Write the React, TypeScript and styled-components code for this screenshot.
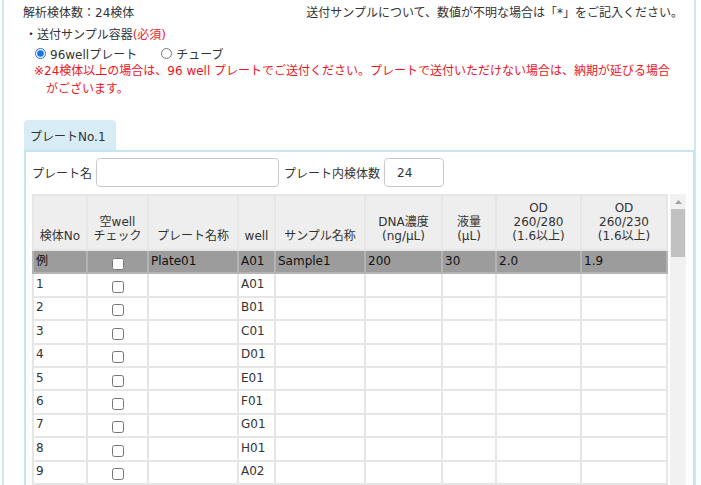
import * as React from 'react'
import styled, { createGlobalStyle } from 'styled-components'

const GlobalStyle = createGlobalStyle`
    html, body {
        margin: 0;
        padding: 0;
        overflow: hidden;
        background: #fff;
    }
    body {
        font-family: "DejaVu Sans", "Noto Sans CJK JP", sans-serif;
        font-size: 12px;
        color: #333;
    }
`

const StyledPage = styled.div`
    margin-left: 2px;
    min-height: 600px;
    border-left: 2px solid #cde8f1;
    border-right: 2px solid #cde8f1;
    padding: 4px 8px 0 20px;
    box-sizing: content-box;
    width: 662px;
`

const StyledTopRow = styled.div`
    display: flex;
    justify-content: space-between;
    line-height: 18px;
    margin-left: -1px;
    padding-right: 3px;
`

const StyledSectionTitle = styled.div`
    margin-top: 4px;
    margin-left: 1px;
    line-height: 18px;
`

const Required = styled.span`
    color: #e8262d;
`

const StyledRadioRow = styled.div`
    display: flex;
    align-items: center;
    height: 18px;
    padding-left: 11px;
`

const StyledRadioLabel = styled.label<{ $gap?: number }>`
    display: flex;
    align-items: center;
    margin-right: ${(p) => p.$gap ?? 0}px;
    input {
        width: 11px;
        height: 11px;
        margin: 0 4px 0 0;
        accent-color: #1a73e8;
    }
`

const StyledNote = styled.div`
    color: #f0141e;
    line-height: 18px;
    padding-left: 22px;
    padding-right: 10px;
    text-indent: -12px;
`

const StyledTab = styled.div`
    display: inline-flex;
    align-items: center;
    height: 30px;
    margin-top: 22px;
    padding: 0 10px 0 6px;
    background: #d7ecf4;
    border-radius: 4px 4px 0 0;
`

const StyledPanel = styled.div`
    border: 2px solid #c8e5ef;
    width: 659px;
    padding: 6px 2px 0 6px;
    min-height: 400px;
`

const StyledFormRow = styled.div`
    display: flex;
    align-items: center;
    gap: 5px;
    height: 29px;
`

const StyledLabel = styled.span`
    margin-right: -1px;
`

const StyledInput = styled.input<{ $width: number }>`
    width: ${(p) => p.$width}px;
    height: 29px;
    box-sizing: border-box;
    border: 1px solid #c9c9c9;
    border-radius: 4px;
    padding: 0 12px;
    font: inherit;
    color: #333;
`

const StyledGridArea = styled.div`
    display: flex;
    gap: 2px;
    margin-top: 7px;
    align-items: flex-start;
`

const StyledTable = styled.table`
    width: 634px;
    table-layout: fixed;
    border-collapse: collapse;
    th, td {
        border: 2px solid #e6e6e6;
    }
    th {
        background: #eeeeee;
        font-weight: normal;
        line-height: 14px;
        vertical-align: bottom;
        padding: 0 2px 6px;
        height: 47px;
        text-align: center;
        color: #333;
    }
    td {
        height: 19.4px;
        padding: 0 2px 2px;
        line-height: 16px;
        vertical-align: middle;
        color: #333;
    }
`

const StyledRow = styled.tr<{ $example?: boolean }>`
    background: ${(p) => (p.$example ? '#9c9c9c' : '#fff')};
    td {
        color: ${(p) => (p.$example ? '#111' : '#333')};
        border-color: ${(p) => (p.$example ? '#b4b4b4' : '#e6e6e6')};
    }
`

const StyledCheckCell = styled.td`
    text-align: center;
    input {
        width: 12px;
        height: 12px;
        margin: 6px 0 0;
        vertical-align: middle;
    }
`

const StyledScrollbar = styled.div`
    width: 16px;
    height: 400px;
    background: #f1f1f1;
    display: flex;
    flex-direction: column;
    align-items: center;
`

const StyledArrow = styled.div`
    height: 15px;
    display: flex;
    align-items: center;
    justify-content: center;
`

const StyledThumb = styled.div`
    width: 14px;
    height: 48px;
    background: #c1c1c1;
`

const wells = ['A', 'B', 'C', 'D', 'E', 'F', 'G', 'H']

const rows = Array.from({ length: 24 }, (_, i) => ({
    no: i + 1,
    well: `${wells[i % 8]}0${Math.floor(i / 8) + 1}`,
}))

const columns = [54, 61, 90, 37, 90, 77, 54, 85, 86]

const App = () => {
    return (
        <>
            <GlobalStyle />
            <StyledPage>
                <StyledTopRow>
                    <span>解析検体数：24検体</span>
                    <span>送付サンプルについて、数値が不明な場合は「*」をご記入ください。</span>
                </StyledTopRow>
                <StyledSectionTitle>
                    ・送付サンプル容器<Required>(必須)</Required>
                </StyledSectionTitle>
                <StyledRadioRow>
                    <StyledRadioLabel $gap={24}>
                        <input type="radio" name="container" defaultChecked />
                        96wellプレート
                    </StyledRadioLabel>
                    <StyledRadioLabel>
                        <input type="radio" name="container" />
                        チューブ
                    </StyledRadioLabel>
                </StyledRadioRow>
                <StyledNote>
                    ※24検体以上の場合は、96 well プレートでご送付ください。プレートで送付いただけない場合は、納期が延びる場合がございます。
                </StyledNote>
                <StyledTab>プレートNo.1</StyledTab>
                <StyledPanel>
                    <StyledFormRow>
                        <StyledLabel>プレート名</StyledLabel>
                        <StyledInput $width={183} />
                        <StyledLabel>プレート内検体数</StyledLabel>
                        <StyledInput $width={60} defaultValue="24" />
                    </StyledFormRow>
                    <StyledGridArea>
                        <StyledTable>
                            <colgroup>
                                {columns.map((w, i) => (
                                    <col key={i} style={{ width: w }} />
                                ))}
                            </colgroup>
                            <thead>
                                <tr>
                                    <th>検体No</th>
                                    <th>
                                        空well
                                        <br />
                                        チェック
                                    </th>
                                    <th>プレート名称</th>
                                    <th>well</th>
                                    <th>サンプル名称</th>
                                    <th>
                                        DNA濃度
                                        <br />
                                        (ng/μL)
                                    </th>
                                    <th>
                                        液量
                                        <br />
                                        (μL)
                                    </th>
                                    <th>
                                        OD
                                        <br />
                                        260/280
                                        <br />
                                        (1.6以上)
                                    </th>
                                    <th>
                                        OD
                                        <br />
                                        260/230
                                        <br />
                                        (1.6以上)
                                    </th>
                                </tr>
                            </thead>
                            <tbody>
                                <StyledRow $example>
                                    <td>例</td>
                                    <StyledCheckCell>
                                        <input type="checkbox" />
                                    </StyledCheckCell>
                                    <td>Plate01</td>
                                    <td>A01</td>
                                    <td>Sample1</td>
                                    <td>200</td>
                                    <td>30</td>
                                    <td>2.0</td>
                                    <td>1.9</td>
                                </StyledRow>
                                {rows.map((row) => (
                                    <StyledRow key={row.no}>
                                        <td>{row.no}</td>
                                        <StyledCheckCell>
                                            <input type="checkbox" />
                                        </StyledCheckCell>
                                        <td></td>
                                        <td>{row.well}</td>
                                        <td></td>
                                        <td></td>
                                        <td></td>
                                        <td></td>
                                        <td></td>
                                    </StyledRow>
                                ))}
                            </tbody>
                        </StyledTable>
                        <StyledScrollbar>
                            <StyledArrow>
                                <svg width="7" height="4" viewBox="0 0 7 4">
                                    <path d="M3.5 0 L7 4 L0 4 Z" fill="#a3a3a3" />
                                </svg>
                            </StyledArrow>
                            <StyledThumb />
                        </StyledScrollbar>
                    </StyledGridArea>
                </StyledPanel>
            </StyledPage>
        </>
    )
}

export default App
